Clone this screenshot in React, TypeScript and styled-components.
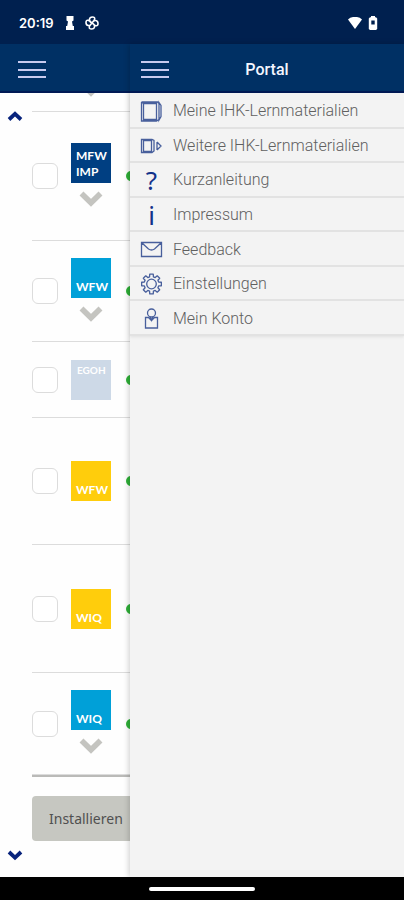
import React from "react";
import styled, { createGlobalStyle } from "styled-components";

const GlobalStyle = createGlobalStyle`
  *, *::before, *::after { box-sizing: border-box; }
  body { margin: 0; background: #000; font-family: Roboto, "Liberation Sans", sans-serif; }
  button { font: inherit; border: 0; padding: 0; background: none; cursor: pointer; }
`;

const Screen = styled.div`
  display: flex;
  flex-direction: column;
  height: 100vh;
  overflow: hidden;
`;

const StatusBar = styled.header`
  display: flex;
  flex: none;
  align-items: center;
  gap: 9px;
  height: 44px;
  padding: 2px 26px 0 19px;
  background: #00204f;
  color: #fff;
`;

const Clock = styled.time`
  font: 600 13px/16px Inter, sans-serif;
  margin-right: 2px;
`;

const StatusIcons = styled.div`
  display: flex;
  gap: 6px;
  margin-left: auto;
`;

const Workspace = styled.div`
  display: flex;
  flex: 1;
  min-height: 0;
`;

const Page = styled.main`
  display: flex;
  flex: 0 0 130px;
  flex-direction: column;
  min-width: 0;
  overflow: hidden;
  background: #fefefe;
`;

const Drawer = styled.aside`
  display: flex;
  flex: 1;
  flex-direction: column;
  min-width: 0;
  z-index: 1;
  background: #f3f3f3;
  box-shadow: -1px 0 6px rgba(0, 0, 0, 0.2);
`;

const TitleBar = styled.div<{ $inset: number }>`
  display: grid;
  flex: none;
  grid-template-columns: 1fr auto 1fr;
  align-items: center;
  height: 49px;
  padding: 4px ${(p) => p.$inset}px 0;
  border-bottom: 2px solid #001a55;
  background: #003064;
`;

const Title = styled.h1`
  margin: 0;
  color: #f4f6ff;
  font-size: 16px;
  font-weight: 500;
  line-height: 20px;
`;

const Hamburger = styled.button`
  display: flex;
  flex-direction: column;
  justify-content: space-between;
  width: 28px;
  height: 17px;
`;

const Bar = styled.span`
  width: 100%;
  height: 2px;
  background: #c8caee;
`;

const PageBody = styled.div`
  display: flex;
  flex: 1;
  min-height: 0;
`;

const Scroller = styled.nav`
  display: flex;
  flex: none;
  flex-direction: column;
  justify-content: space-between;
  width: 32px;
  padding: 16px 0 14px 7px;
`;

const ScrollButton = styled.button`
  display: flex;
  width: 16px;
  height: 14px;
`;

const Content = styled.div`
  flex: none;
  width: 320px;
`;

const List = styled.ul`
  margin: 0;
  padding: 0;
  border-bottom: 2px solid #babab8;
  list-style: none;
`;

const Row = styled.li<{ $height: number }>`
  display: flex;
  align-items: center;
  height: ${(p) => p.$height}px;
  border-bottom: 1px solid #dcdcdc;
`;

const ScrolledRow = styled.li`
  display: flex;
  align-items: flex-end;
  height: 19px;
  padding: 0 0 13px 47px;
  overflow: hidden;
  border-bottom: 1px solid #dcdcdc;
`;

const Check = styled.input`
  appearance: none;
  width: 26px;
  height: 26px;
  margin: 0 13px 0 0;
  border: 1px solid #dcdcdc;
  border-radius: 6px;
  background: #fff;
`;

const Course = styled.div<{ $expandable?: boolean }>`
  display: flex;
  flex-direction: column;
  align-items: center;
  gap: 8px;
  margin-right: 15px;
  padding-bottom: ${(p) => (p.$expandable ? 2 : 0)}px;
`;

const Tile = styled.div<{ $color: string; $top?: boolean }>`
  display: flex;
  flex-direction: column;
  justify-content: ${(p) => (p.$top ? "flex-start" : "flex-end")};
  width: 40px;
  height: 40px;
  padding: ${(p) => (p.$top ? "2px 0 0 6px" : "0 0 3px 5px")};
  background: ${(p) => p.$color};
  color: #fff;
  font: 700 ${(p) => (p.$top ? 10 : 12)}px/16px Lato, sans-serif;
`;

const Expand = styled.button`
  display: flex;
  height: 17px;
`;

const Dot = styled.span`
  width: 10px;
  height: 10px;
  border-radius: 50%;
  background: #2fb038;
`;

const Install = styled.button`
  display: block;
  width: 240px;
  height: 45px;
  margin-top: 19px;
  padding-left: 17px;
  border-radius: 4px;
  background: #c6c7c1;
  color: #505050;
  font: 400 14px/20px "Noto Sans", sans-serif;
  text-align: left;
`;

const Menu = styled.ul`
  display: grid;
  grid-auto-rows: 1fr;
  height: 243px;
  margin: 0;
  padding: 1px 0 0;
  list-style: none;
  box-shadow: 0 1px 3px rgba(0, 0, 0, 0.08);
`;

const MenuItem = styled.li`
  display: flex;
  border-bottom: 2px solid #e2e2e2;
`;

const MenuLink = styled.a`
  display: flex;
  flex: 1;
  align-items: center;
  gap: 10px;
  padding: 2px 0 0 10px;
  color: #606060;
  font-size: 16px;
  font-weight: 300;
  line-height: 20px;
  text-decoration: none;
  white-space: nowrap;
`;

const MenuIcon = styled.svg`
  flex: none;
  width: 23px;
  height: 24px;
  fill: none;
  stroke: #485f9c;
  stroke-width: 1.3;
`;

const Symbol = styled.span`
  width: 23px;
  color: #12328a;
  font: 400 26px/24px "Noto Sans", sans-serif;
  text-align: center;
`;

const HomeBar = styled.footer`
  display: flex;
  flex: none;
  align-items: center;
  justify-content: center;
  height: 23px;
  background: #000;
`;

const HomeHandle = styled.span`
  width: 106px;
  height: 4px;
  border-radius: 2px;
  background: #fff;
`;

function Chevron() {
  return (
    <svg width="24" height="17" viewBox="0 0 24 17" fill="none" stroke="#c4c4c0" strokeWidth="5.6">
      <path d="M2.5 2.5 12 11.8l9.5-9.3" />
    </svg>
  );
}

function ScrollArrow({ up }: { up?: boolean }) {
  return (
    <svg width="16" height="14" viewBox="0 0 16 14" fill="none" stroke="#08237c" strokeWidth="3.8">
      <path d={up ? "M2 10.500l6-5.600 6 5.600" : "M2 3l6 5.600L14 3"} />
    </svg>
  );
}

function MenuToggle({ label }: { label: string }) {
  return (
    <Hamburger type="button" aria-label={label}>
      <Bar />
      <Bar />
      <Bar />
    </Hamburger>
  );
}

type CourseRow = { id: string; lines: string[]; color: string; height: number; expandable?: boolean; top?: boolean };

const courses: CourseRow[] = [
  { id: "mfw-imp", lines: ["MFW", "IMP"], color: "#003f82", height: 129, expandable: true },
  { id: "wfw-blue", lines: ["WFW"], color: "#00a0d8", height: 101, expandable: true },
  { id: "egoh", lines: ["EGOH"], color: "#cdd9e7", height: 76, top: true },
  { id: "wfw-yellow", lines: ["WFW"], color: "#ffcd0c", height: 127 },
  { id: "wiq-yellow", lines: ["WIQ"], color: "#ffcd0c", height: 128 },
  { id: "wiq-blue", lines: ["WIQ"], color: "#00a0d8", height: 102, expandable: true },
];

const gear = Array.from({ length: 8 }, (_, i) => {
  const point = (r: number, deg: number) => {
    const a = ((i * 45 + deg) * Math.PI) / 180;
    return `${(11.5 + r * Math.cos(a)).toFixed(2)} ${(12 + r * Math.sin(a)).toFixed(2)}`;
  };
  return `${i ? "L" : "M"}${point(7.4, -15)}L${point(10, -10)}L${point(10, 10)}L${point(7.4, 15)}`;
}).join("") + "Z";

const menu: { label: string; icon: React.ReactNode }[] = [
  {
    label: "Meine IHK-Lernmaterialien",
    icon: (
      <MenuIcon viewBox="0 0 23 24">
        <path d="M3.500 4.500h13v16h-13zM1.500 3v19h15l2.500-1.500M1.500 3l2 1.500M1.500 3h16l1.500 1.500M16.500 4.500V22M19 3.500l2 3v11l-2 3.500z" />
      </MenuIcon>
    ),
  },
  {
    label: "Weitere IHK-Lernmaterialien",
    icon: (
      <MenuIcon viewBox="0 0 23 24">
        <path d="M3.500 6.500h8v11h-8zM1.500 5.500v13h10.500l2-1.500v-10.500l-2-1zM11.500 6.500V18M17 8l4 4-4 4M17 8v8" />
      </MenuIcon>
    ),
  },
  { label: "Kurzanleitung", icon: <Symbol aria-hidden="true">?</Symbol> },
  { label: "Impressum", icon: <Symbol aria-hidden="true">i</Symbol> },
  {
    label: "Feedback",
    icon: (
      <MenuIcon viewBox="0 0 23 24">
        <path d="M1.500 4.500h20v14h-20zM1.500 4.500l7 6.500q3 2 6 0l7-6.500" />
      </MenuIcon>
    ),
  },
  {
    label: "Einstellungen",
    icon: (
      <MenuIcon viewBox="0 0 23 24">
        <path d={gear} strokeLinejoin="round" />
        <circle cx="11.5" cy="12" r="4.800" />
      </MenuIcon>
    ),
  },
  {
    label: "Mein Konto",
    icon: (
      <MenuIcon viewBox="0 0 23 24">
        <circle cx="11.500" cy="6" r="4" />
        <path d="M8.500 10.500H5.500V21h12V10.500h-3l-3 3zM10 9.500l1.500 4 1.500-4" />
      </MenuIcon>
    ),
  },
];

export default function App() {
  return (
    <Screen>
      <GlobalStyle />
      <StatusBar>
        <Clock>20:19</Clock>
        <svg width="10" height="16" viewBox="0 0 10 16" fill="#fff" aria-hidden="true">
          <path d="M1.500 1h7v4.500L7 6.500l.8 4.500H9v4H1v-4h1.200L3 6.500l-1.500-1z" />
        </svg>
        <svg width="16" height="16" viewBox="0 0 16 16" fill="none" stroke="#fff" strokeWidth="1.600" aria-hidden="true">
          <path d="M8 8C4 6 5 2 8.500 2S11 5 8 8c2-4 6-3 6 .5S11 11 8 8c4 2 3 6-.5 6S5 11 8 8c-2 4-6 3-6-.5S5 5 8 8z" />
        </svg>
        <StatusIcons>
          <svg width="14" height="16" viewBox="0 0 14 16" fill="#fff" aria-hidden="true">
            <path d="M0 4.500Q2 2 5 2h4q3 0 5 2.500L7 14z" />
          </svg>
          <svg width="10" height="16" viewBox="0 0 10 16" aria-hidden="true">
            <path d="M3 1h4v1.200h1L9.200 3.500V14L8 15H2L.8 14V3.500L2 2.200h1z" fill="#fff" />
            <path d="M3.300 5.500h3.400v4H3.300z" fill="#00204f" />
          </svg>
        </StatusIcons>
      </StatusBar>
      <Workspace>
        <Page>
          <TitleBar $inset={18}>
            <MenuToggle label="Menü öffnen" />
          </TitleBar>
          <PageBody>
            <Scroller aria-label="Blättern">
              <ScrollButton type="button" aria-label="Nach oben">
                <ScrollArrow up />
              </ScrollButton>
              <ScrollButton type="button" aria-label="Nach unten">
                <ScrollArrow />
              </ScrollButton>
            </Scroller>
            <Content>
              <List>
                <ScrolledRow>
                  <Chevron />
                </ScrolledRow>
                {courses.map((c) => (
                  <Row key={c.id} $height={c.height}>
                    <Check type="checkbox" aria-label={c.lines.join(" ")} />
                    <Course $expandable={c.expandable}>
                      <Tile $color={c.color} $top={c.top}>
                        {c.lines.map((line) => (
                          <span key={line}>{line}</span>
                        ))}
                      </Tile>
                      {c.expandable && (
                        <Expand type="button" aria-label="Aufklappen">
                          <Chevron />
                        </Expand>
                      )}
                    </Course>
                    <Dot />
                  </Row>
                ))}
              </List>
              <Install type="button">Installieren</Install>
            </Content>
          </PageBody>
        </Page>
        <Drawer>
          <TitleBar $inset={11}>
            <MenuToggle label="Menü schließen" />
            <Title>Portal</Title>
          </TitleBar>
          <Menu>
            {menu.map((item) => (
              <MenuItem key={item.label}>
                <MenuLink href="#">
                  {item.icon}
                  {item.label}
                </MenuLink>
              </MenuItem>
            ))}
          </Menu>
        </Drawer>
      </Workspace>
      <HomeBar>
        <HomeHandle />
      </HomeBar>
    </Screen>
  );
}
